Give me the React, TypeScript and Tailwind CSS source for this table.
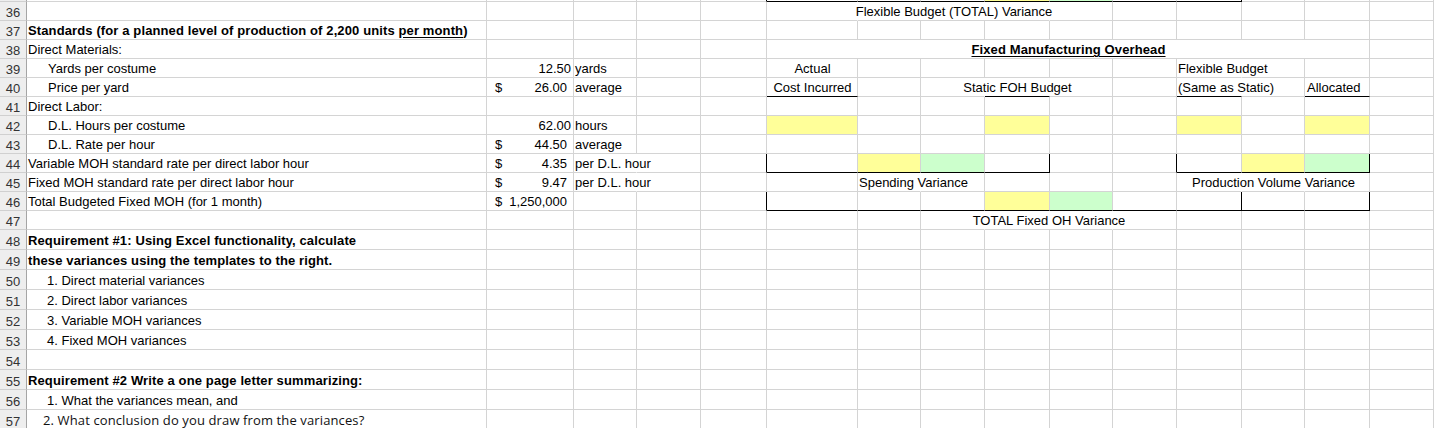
import React from "react";

// one worksheet cell; columns A..O are 0..14
type Cell = {
  t?: React.ReactNode;
  a?: "l" | "c" | "r";
  b?: boolean;
  u?: boolean;
  span?: number;
  fill?: "y" | "g";
  r?: "n" | "k"; // right border: hidden / black
  bb?: boolean; // black bottom border
  pad?: string;
  acc?: string; // accounting format "$   0.00"
  cls?: string;
};

type Row = { n: string; cells: Record<number, Cell> };

const IND = "pl-[21px]";

const rows: Row[] = [
  {
    n: "",
    cells: {
      4: { r: "k" },
      5: { bb: true },
      6: { bb: true },
      7: { bb: true },
      8: { bb: true, fill: "y" },
      9: { bb: true, fill: "g" },
      10: { bb: true },
      11: { bb: true, r: "k" },
    },
  },
  {
    n: "36",
    cells: {
      5: { r: "n" },
      6: { span: 3, a: "c", r: "n", t: "Flexible Budget (TOTAL) Variance" },
    },
  },
  {
    n: "37",
    cells: {
      0: {
        b: true,
        t: (
          <>
            Standards (for a planned level of production of 2,200 units{" "}
            <span className="underline underline-offset-[2px]">per month</span>)
          </>
        ),
      },
    },
  },
  {
    n: "38",
    cells: {
      0: { t: "Direct Materials:" },
      5: { span: 9, a: "c", b: true, u: true, t: "Fixed Manufacturing Overhead" },
    },
  },
  {
    n: "39",
    cells: {
      0: { pad: IND, t: "Yards per costume" },
      1: { a: "r", pad: "pr-[2px]", t: "12.50" },
      2: { t: "yards" },
      5: { a: "c", t: "Actual" },
      11: { r: "n", t: "Flexible Budget" },
    },
  },
  {
    n: "40",
    cells: {
      0: { pad: IND, t: "Price per yard" },
      1: { acc: "26.00" },
      2: { t: "average" },
      5: { a: "c", bb: true, t: "Cost Incurred" },
      7: { r: "n" },
      8: { a: "c", bb: true, r: "n", t: "Static FOH Budget" },
      11: { bb: true, r: "n", t: "(Same as Static)" },
      13: { bb: true, pad: "pl-[2px]", t: "Allocated" },
    },
  },
  { n: "41", cells: { 0: { t: "Direct Labor:" } } },
  {
    n: "42",
    cells: {
      0: { pad: IND, t: "D.L. Hours per costume" },
      1: { a: "r", pad: "pr-[2px]", t: "62.00" },
      2: { t: "hours" },
      5: { fill: "y" },
      8: { fill: "y" },
      11: { fill: "y" },
      13: { fill: "y" },
    },
  },
  {
    n: "43",
    cells: {
      0: { pad: IND, t: "D.L. Rate per hour" },
      1: { acc: "44.50" },
      2: { t: "average" },
    },
  },
  {
    n: "44",
    cells: {
      0: { t: "Variable MOH standard rate per direct labor hour" },
      1: { acc: "4.35" },
      2: { r: "n", t: "per D.L. hour" },
      4: { r: "k" },
      5: { bb: true },
      6: { bb: true, fill: "y" },
      7: { bb: true, fill: "g" },
      8: { bb: true, r: "k" },
      10: { r: "k" },
      11: { bb: true },
      12: { bb: true, fill: "y" },
      13: { bb: true, fill: "g", r: "k" },
    },
  },
  {
    n: "45",
    cells: {
      0: { t: "Fixed MOH standard rate per direct labor hour" },
      1: { acc: "9.47" },
      2: { r: "n", t: "per D.L. hour" },
      6: { r: "n", t: "Spending Variance" },
      11: { r: "n" },
      12: { a: "c", r: "n", t: "Production Volume Variance" },
    },
  },
  {
    n: "46",
    cells: {
      0: { t: "Total Budgeted Fixed MOH (for 1 month)" },
      1: { acc: "1,250,000" },
      4: { r: "k" },
      5: { bb: true },
      6: { bb: true },
      7: { bb: true },
      8: { bb: true, fill: "y" },
      9: { bb: true, fill: "g" },
      10: { bb: true },
      11: { bb: true, r: "k" },
      12: { bb: true },
      13: { bb: true, r: "k" },
    },
  },
  {
    n: "47",
    cells: {
      7: { r: "n" },
      8: { span: 2, a: "c", r: "n", t: "TOTAL Fixed OH Variance" },
    },
  },
  { n: "48", cells: { 0: { b: true, t: "Requirement #1: Using Excel functionality, calculate" } } },
  { n: "49", cells: { 0: { b: true, t: "these variances using the templates to the right." } } },
  { n: "50", cells: { 0: { pad: "pl-[20px]", t: "1. Direct material variances" } } },
  { n: "51", cells: { 0: { pad: "pl-[20px]", t: "2. Direct labor variances" } } },
  { n: "52", cells: { 0: { pad: "pl-[20px]", t: "3. Variable MOH variances" } } },
  { n: "53", cells: { 0: { pad: "pl-[20px]", t: "4. Fixed MOH variances" } } },
  { n: "54", cells: {} },
  { n: "55", cells: { 0: { b: true, t: "Requirement #2 Write a one page letter summarizing:" } } },
  { n: "56", cells: { 0: { pad: "pl-[20px]", t: "1. What the variances mean, and" } } },
  {
    n: "57",
    cells: {
      0: {
        pad: "pl-[16px]",
        cls: "font-['Open_Sans',sans-serif] tracking-[0.12px] text-[#111]",
        t: "2. What conclusion do you draw from the variances?",
      },
    },
  },
];

const spanCls: Record<number, string> = {
  2: "col-span-2",
  3: "col-span-3",
  9: "col-span-9",
};

const SheetCell: React.FC<{ cell: Cell }> = ({ cell }) => {
  const align =
    cell.a === "c" ? "justify-center" : cell.a === "r" ? "justify-end" : "justify-start";
  const cls = [
    "flex items-end whitespace-nowrap border-b border-r border-[#d4d4d4] pb-[1px] leading-[15px]",
    align,
    cell.span ? spanCls[cell.span] : "",
    cell.r === "n" ? "border-r-transparent" : cell.r === "k" ? "border-r-black" : "",
    cell.bb ? "border-b-black" : "",
    cell.fill === "y" ? "bg-[#ffff99]" : cell.fill === "g" ? "bg-[#ccffcc]" : "",
    cell.acc ? "" : cell.pad || "pl-[1px]",
    cell.b ? "font-bold tracking-[0.12px]" : "",
    cell.cls || "",
  ].join(" ");

  if (cell.acc) {
    return (
      <div className={cls}>
        <div className="relative z-[1] flex w-full justify-between pl-[8px] pr-[6px]">
          <span>$</span>
          <span>{cell.acc}</span>
        </div>
      </div>
    );
  }

  return (
    <div className={cls}>
      {cell.t != null && (
        <span className={`relative z-[1] ${cell.u ? "underline underline-offset-[2px]" : ""}`}>
          {cell.t}
        </span>
      )}
    </div>
  );
};

export default function App() {
  return (
    <div className="h-[428px] w-[1434px] overflow-hidden bg-white">
      <div className="grid grid-cols-[27px_460px_87px_63px_64px_66px_91px_63px_64px_65px_63px_64px_65px_63px_65px_64px] grid-rows-[2px_repeat(12,19px)_repeat(10,20px)] font-['Liberation_Sans',Arial,sans-serif] text-[13px] text-black">
        {rows.map((row, i) => {
          const out: React.ReactNode[] = [
            <div
              key="h"
              className="flex items-end justify-center border-b border-r border-b-[#d0d0d0] border-r-[#a5a5a5] bg-[#eeeeee] leading-[15px] text-[#333]"
            >
              {row.n}
            </div>,
          ];
          for (let c = 0; c < 15; ) {
            const cell = row.cells[c] || {};
            out.push(<SheetCell key={c} cell={cell} />);
            c += cell.span || 1;
          }
          return <React.Fragment key={i}>{out}</React.Fragment>;
        })}
      </div>
    </div>
  );
}
